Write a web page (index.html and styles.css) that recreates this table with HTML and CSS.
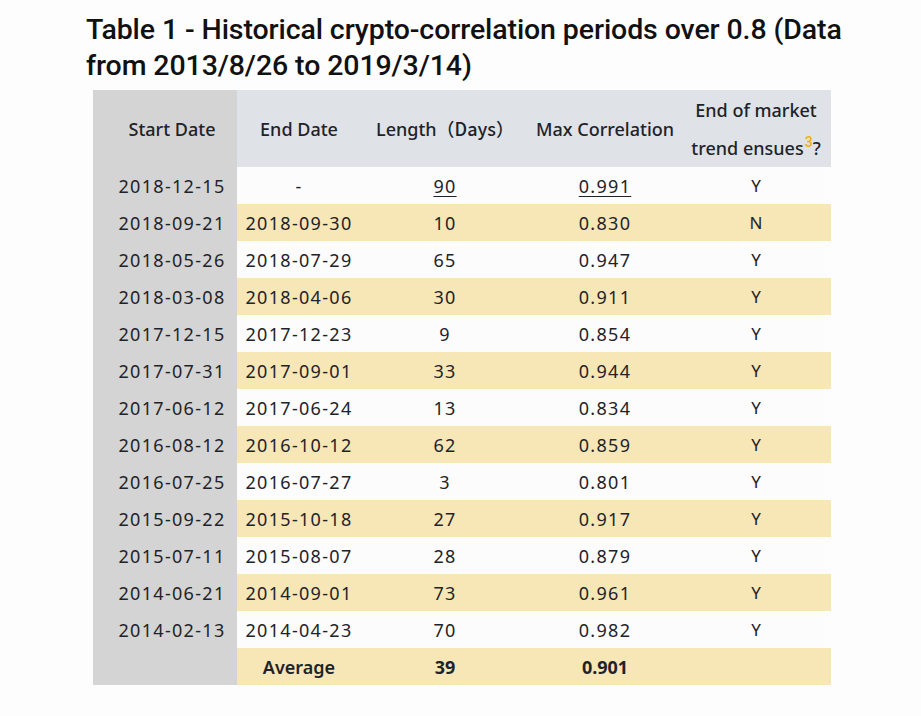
FILE: index.html
```html
<!DOCTYPE html>
<html>
<head>
<meta charset="utf-8">
<link rel="stylesheet" href="styles.css">
</head>
<body>
<div class="page">
  <h1 class="title">Table 1 - Historical crypto-correlation periods over 0.8 (Data from 2013/8/26 to 2019/3/14)</h1>
  <table class="corr">
    <colgroup>
      <col class="c1"><col class="c2"><col class="c3"><col class="c4"><col class="c5">
    </colgroup>
    <thead>
      <tr>
        <th class="start">Start Date</th>
        <th>End Date</th>
        <th>Length<span class="cjk">（Days）</span></th>
        <th>Max Correlation</th>
        <th>End of market<br>trend ensues<span class="note">3</span>?</th>
      </tr>
    </thead>
    <tbody>
      <tr><td class="start">2018-12-15</td><td>-</td><td><u>90</u></td><td><u>0.991</u></td><td class="yn">Y</td></tr>
      <tr><td class="start">2018-09-21</td><td>2018-09-30</td><td>10</td><td>0.830</td><td class="yn">N</td></tr>
      <tr><td class="start">2018-05-26</td><td>2018-07-29</td><td>65</td><td>0.947</td><td class="yn">Y</td></tr>
      <tr><td class="start">2018-03-08</td><td>2018-04-06</td><td>30</td><td>0.911</td><td class="yn">Y</td></tr>
      <tr><td class="start">2017-12-15</td><td>2017-12-23</td><td>9</td><td>0.854</td><td class="yn">Y</td></tr>
      <tr><td class="start">2017-07-31</td><td>2017-09-01</td><td>33</td><td>0.944</td><td class="yn">Y</td></tr>
      <tr><td class="start">2017-06-12</td><td>2017-06-24</td><td>13</td><td>0.834</td><td class="yn">Y</td></tr>
      <tr><td class="start">2016-08-12</td><td>2016-10-12</td><td>62</td><td>0.859</td><td class="yn">Y</td></tr>
      <tr><td class="start">2016-07-25</td><td>2016-07-27</td><td>3</td><td>0.801</td><td class="yn">Y</td></tr>
      <tr><td class="start">2015-09-22</td><td>2015-10-18</td><td>27</td><td>0.917</td><td class="yn">Y</td></tr>
      <tr><td class="start">2015-07-11</td><td>2015-08-07</td><td>28</td><td>0.879</td><td class="yn">Y</td></tr>
      <tr><td class="start">2014-06-21</td><td>2014-09-01</td><td>73</td><td>0.961</td><td class="yn">Y</td></tr>
      <tr><td class="start">2014-02-13</td><td>2014-04-23</td><td>70</td><td>0.982</td><td class="yn">Y</td></tr>
      <tr class="avg"><td class="start"></td><td class="label">Average</td><td>39</td><td>0.901</td><td></td></tr>
    </tbody>
  </table>
</div>
</body>
</html>
```

FILE: styles.css
```css
html, body {
  margin: 0;
  padding: 0;
  background: #fdfdfd;
}
.page {
  padding: 12px 0 0 86px;
  width: 775px;
  font-family: "Noto Sans", sans-serif;
  color: #1e2329;
}
.title {
  margin: 0 0 6px 0;
  font-family: "Roboto", sans-serif;
  font-size: 28.5px;
  line-height: 36px;
  font-weight: 500;
  letter-spacing: -0.1px;
  color: #111;
}
.corr {
  margin-left: 7px;
  border-collapse: collapse;
  table-layout: fixed;
  width: 738px;
}
.c1 { width: 144px; }
.c2 { width: 124px; }
.c3 { width: 168px; }
.c4 { width: 152px; }
.c5 { width: 150px; }
.corr th {
  background: #dfe2e7;
  font-size: 18px;
  font-weight: 500;
  line-height: 38px;
  height: 77px;
  padding: 0;
  text-align: center;
  color: #1e2329;
}
.corr th.start, .corr td.start {
  background: #d4d4d4;
  padding-left: 14px;
}
.cjk {
  font-family: "Noto Sans CJK SC", sans-serif;
}
.note {
  display: inline-block;
  color: #eeb00a;
  font-family: "Roboto", sans-serif;
  font-size: 14px;
  font-weight: 500;
  line-height: 14px;
  vertical-align: 8px;
  margin-left: 1px;
}
.corr td {
  height: 37px;
  padding: 0;
  text-align: center;
  font-size: 18px;
  letter-spacing: 1.3px;
  font-weight: 400;
  color: #1e2329;
}
.corr td.yn {
  letter-spacing: 0;
  font-weight: 400;
  font-size: 17px;
}
.corr tbody tr:nth-child(odd) { background: #fcfcfc; }
.corr tbody tr:nth-child(even) { background: #f7e6b6; }
.corr u {
  text-underline-offset: 3px;
}
.corr tr.avg td {
  font-weight: 700;
  letter-spacing: 0;
}
.corr tr.avg td.label {
  font-weight: 600;
}
```
